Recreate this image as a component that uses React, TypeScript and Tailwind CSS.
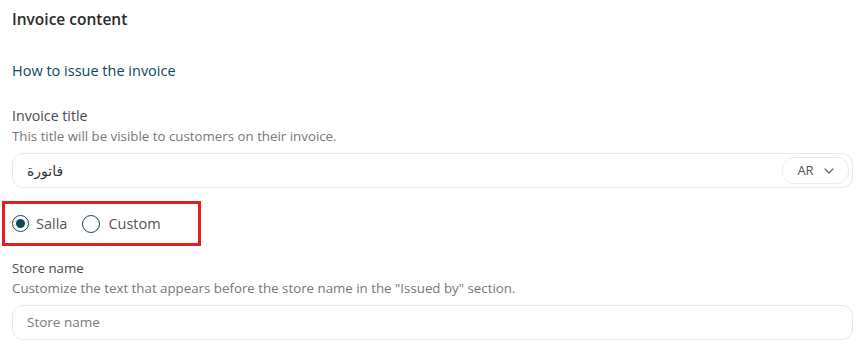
import React from "react";

export default function App() {
  return (
    <div className="w-[863px] h-[362px] bg-white overflow-hidden" style={{ fontFamily: "'Open Sans', 'Noto Sans', sans-serif" }}>
      <div className="pl-[12px] pr-[10px]">
        <div className="pt-[9px] h-[30px] text-[15.5px] leading-[20px] font-semibold text-[#2b2b2b]">Invoice content</div>
        <div className="mt-[31px] h-[20px] text-[14.5px] leading-[20px] text-[#0c4a57]">How to issue the invoice</div>
        <div className="mt-[25px] text-[14.2px] leading-[20px] text-[#4a4a4a]">Invoice title</div>
        <div className="mt-[1px] text-[13.3px] leading-[18px] text-[#777]">This title will be visible to customers on their invoice.</div>
        <div className="mt-[8px] h-[35px] rounded-[11px] border border-[#e9e9e9] flex items-center justify-between pl-[14px] pr-[3px]">
          <span className="text-[14px] text-[#333]" style={{ fontFamily: "'Noto Sans', 'DejaVu Sans', sans-serif" }} dir="rtl">فاتورة</span>
          <button className="h-[27px] w-[67px] rounded-[12px] border border-[#ececec] flex items-center justify-center gap-[10px] text-[13px] text-[#555]">
            <span>AR</span>
            <svg width="10" height="6" viewBox="0 0 10 6" fill="none"><path d="M1 1l4 4 4-4" stroke="#666" strokeWidth="1.2" strokeLinecap="round" strokeLinejoin="round" /></svg>
          </button>
        </div>
        <div className="mt-[13px] -ml-[10px] w-[199px] h-[45px] border-[3px] border-[#e0201f] flex items-center pl-[7px]">
          <label className="flex items-center gap-[7px]">
            <span className="w-[17px] h-[17px] rounded-full border-[1.5px] border-[#0c4a57] flex items-center justify-center">
              <span className="w-[9px] h-[9px] rounded-full bg-[#0c4a57]"></span>
            </span>
            <span className="text-[14.5px] text-[#555]">Salla</span>
          </label>
          <label className="flex items-center gap-[8px] ml-[15px]">
            <span className="w-[18px] h-[18px] rounded-full border-[1.5px] border-[#0c4a57]"></span>
            <span className="text-[14.5px] text-[#555]">Custom</span>
          </label>
        </div>
        <div className="mt-[12px] text-[13.3px] leading-[20px] text-[#4a4a4a]">Store name</div>
        <div className="mt-[1px] text-[13.3px] leading-[18px] text-[#777]">Customize the text that appears before the store name in the "Issued by" section.</div>
        <div className="mt-[8px] h-[35px] rounded-[11px] border border-[#e9e9e9] flex items-center pl-[14px]">
          <span className="text-[13.5px] text-[#7a7a7a]">Store name</span>
        </div>
      </div>
    </div>
  );
}
